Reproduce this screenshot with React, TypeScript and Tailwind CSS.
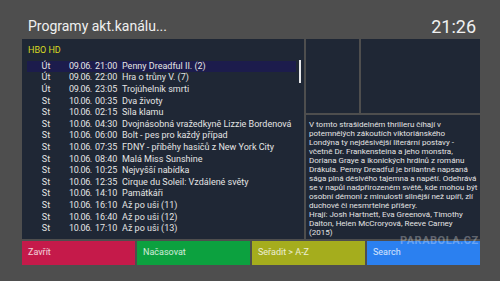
import React from "react";

const ROWS = [
  { d: "Út", date: "09.06.", t: "21:00", title: "Penny Dreadful II. (2)" },
  { d: "Út", date: "09.06.", t: "22:00", title: "Hra o trůny V. (7)" },
  { d: "Út", date: "09.06.", t: "23:05", title: "Trojúhelník smrti" },
  { d: "St", date: "10.06.", t: "00:35", title: "Dva životy" },
  { d: "St", date: "10.06.", t: "02:15", title: "Síla klamu" },
  { d: "St", date: "10.06.", t: "04:30", title: "Dvojnásobná vražedkyně Lizzie Bordenová" },
  { d: "St", date: "10.06.", t: "06:00", title: "Bolt - pes pro každý případ" },
  { d: "St", date: "10.06.", t: "07:35", title: "FDNY - příběhy hasičů z New York City" },
  { d: "St", date: "10.06.", t: "08:40", title: "Malá Miss Sunshine" },
  { d: "St", date: "10.06.", t: "10:25", title: "Nejvyšší nabídka" },
  { d: "St", date: "10.06.", t: "12:35", title: "Cirque du Soleil: Vzdálené světy" },
  { d: "St", date: "10.06.", t: "14:10", title: "Památkáři" },
  { d: "St", date: "10.06.", t: "16:10", title: "Až po uši (11)" },
  { d: "St", date: "10.06.", t: "16:40", title: "Až po uši (12)" },
  { d: "St", date: "10.06.", t: "17:10", title: "Až po uši (13)" },
];

const DESC = [
  "V tomto strašidelném thrilleru číhají v",
  "potemnělých zákoutích viktoriánského",
  "Londýna ty nejděsivější literární postavy -",
  "včetně Dr. Frankensteina a jeho monstra,",
  "Doriana Graye a ikonických hrdinů z románu",
  "Drákula. Penny Dreadful je brilantně napsaná",
  "sága plná děsivého tajemna a napětí. Odehrává",
  "se v napůl nadpřirozeném světě, kde mohou být",
  "osobní démoni z minulosti silnější než upíři, zlí",
  "duchové či nesmrtelné příšery.",
  "Hrají: Josh Hartnett, Eva Greenová, Timothy",
  "Dalton, Helen McCroryová, Reeve Carney",
  "(2015)",
];

const BUTTONS = [
  { label: "Zavřít", cls: "bg-[#c51a4a]" },
  { label: "Načasovat", cls: "bg-[#0ca13f]" },
  { label: "Seřadit > A-Z", cls: "bg-[#a5ad1d]" },
  { label: "Search", cls: "bg-[#2b80f0]" },
];

export default function App() {
  return (
    <div className="relative w-[500px] h-[281px] overflow-hidden bg-[#4e4e4e] pl-[22px] pr-[20px] font-['Roboto','Liberation_Sans',sans-serif] text-[#e4e4e4]">
      {/* header */}
      <div className="flex justify-between items-start h-[39px]">
        <p className="mt-[19px] pl-[6px] text-[14px] leading-[14px] text-[#f0f0f0]">
          Programy akt.kanálu...
        </p>
        <p className="mt-[18px] mr-[4px] text-[18px] leading-[18px] text-[#f0f0f0]">21:26</p>
      </div>

      {/* panels */}
      <div className="flex gap-[2px] h-[200px]">
        <div className="relative w-[282px] bg-[#1f2735] pt-[6px]">
          <p className="pl-[6px] h-[11px] text-[9px] leading-[11px] text-[#dada22]">HBO HD</p>
          <div className="mt-[4.5px] ml-[5px] w-[269px]">
            {ROWS.map((r, i) => (
              <div
                key={i}
                className={`flex items-center h-[11.6px] text-[9px] leading-none whitespace-nowrap ${
                  i === 0 ? "bg-[#1c1c4c]" : ""
                }`}
              >
                <span className="w-[38px] text-center">{r.d}</span>
                <span className="w-[26px] ml-[4px] tracking-[-0.35px]">{r.date}</span>
                <span className="w-[27px]">{r.t}</span>
                <span>{r.title}</span>
              </div>
            ))}
          </div>
          <div className="absolute left-[277px] top-[21px] w-[2px] h-[23px] bg-white/90" />
        </div>

        <div className="flex-1 flex flex-col gap-[2px]">
          <div className="flex gap-[2px] h-[74px]">
            <div className="w-[53px] bg-[#1f2735]" />
            <div className="flex-1 bg-[#1f2735]" />
          </div>
          <div className="flex-1 bg-[#1f2735] pl-[3px] pt-[4.5px] text-[8px] leading-[9px] whitespace-nowrap">
            {DESC.map((l, i) => (
              <div key={i}>{l}</div>
            ))}
          </div>
        </div>
      </div>

      {/* color buttons */}
      <div className="flex gap-[2px] mt-[2px] h-[24px]">
        {BUTTONS.map((b) => (
          <div
            key={b.label}
            className={`flex-1 flex items-center pl-[6px] text-[9px] text-white/80 ${b.cls}`}
          >
            {b.label}
          </div>
        ))}
      </div>

      <div className="absolute left-[400px] top-[235px] text-[11px] leading-[11px] font-bold tracking-[0.5px] text-white/30">
        PARABOLA.CZ
      </div>
    </div>
  );
}
